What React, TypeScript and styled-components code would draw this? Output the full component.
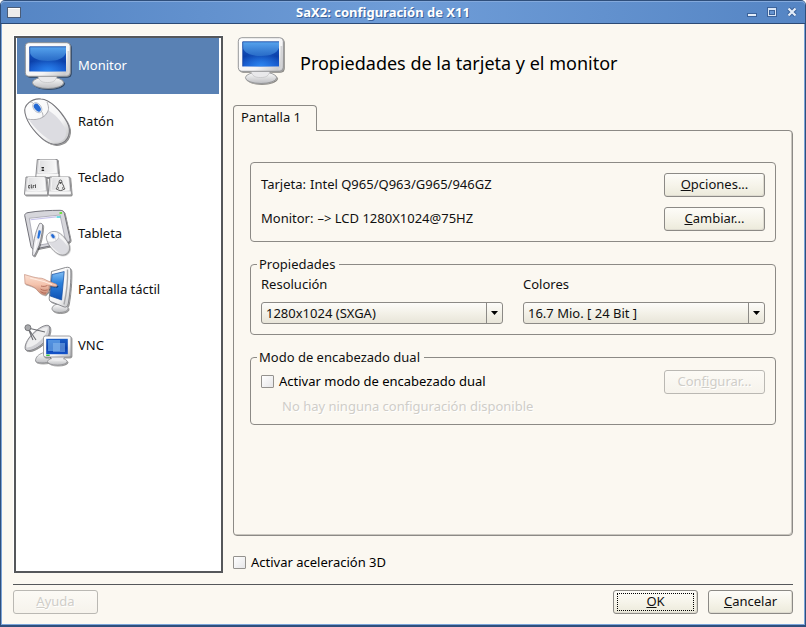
import React from "react";
import styled, { createGlobalStyle, css } from "styled-components";

const ink = "#101010";
const paper = "#fbf8f1";
const line = "#8c8a86";

const GlobalStyle = createGlobalStyle`
  *, *::before, *::after { box-sizing: border-box; }
  body { margin: 0; background: #fff; }
  body, button, select, input {
    font-family: "Noto Sans", "Open Sans", sans-serif;
    font-size: 13px;
    line-height: 20px;
    color: ${ink};
  }
`;

const Window = styled.div`
  display: flex;
  flex-direction: column;
  min-height: 100vh;
  border: 1px solid #2f4f7c;
  border-bottom-width: 2px;
  border-radius: 5px 5px 0 0;
  background: ${paper};
  box-shadow: inset 1px 0 #7ba4d8, inset -1px 0 #7ba4d8, inset 0 -1px #7ba4d8;
`;

const TitleBar = styled.header`
  display: grid;
  grid-template-columns: 26px 1fr 63px;
  align-items: center;
  height: 23px;
  border-bottom: 1px solid #2c4a75;
  border-radius: 4px 4px 0 0;
  box-shadow: inset 0 1px #83a9dc;
  background: linear-gradient(90deg, #5585c4, #6f9dd8 50%, #5585c4);
`;

const Title = styled.h1`
  margin: 0;
  padding-right: 3px;
  font-size: 13px;
  line-height: 20px;
  font-weight: 700;
  text-align: center;
  color: #fff;
  text-shadow: 1px 1px #3c639b;
`;

const WindowButton = styled.button`
  display: flex;
  justify-content: center;
  align-items: center;
  justify-self: center;
  width: 20px;
  height: 20px;
  padding: 0;
  border: 0;
  background: none;
`;

const WindowButtons = styled.div`
  display: flex;
`;

const Body = styled.div`
  display: flex;
  flex: 1;
  gap: 10px;
  padding: 11px 12px 11px;
`;

const Sidebar = styled.nav`
  flex: 0 0 210px;
  border: 1px solid #fff;
  border-right: 0;
  border-bottom: 0;
`;

const SidebarList = styled.ul`
  height: 100%;
  margin: 0;
  padding: 0 2px 0 1px;
  list-style: none;
  border: 2px solid #55575a;
  background: #fff;
`;

const SidebarItem = styled.button<{ $selected?: boolean }>`
  display: flex;
  align-items: center;
  gap: 6px;
  width: 100%;
  height: 56px;
  padding: 0 7px;
  border: 0;
  background: ${(p) => (p.$selected ? "#5981b4" : "transparent")};
  color: ${(p) => (p.$selected ? "#fff" : ink)};
  text-align: left;
`;

const ItemLabel = styled.span`
  padding-bottom: 2px;
`;

const Main = styled.main`
  display: flex;
  flex: 1;
  flex-direction: column;
  min-width: 0;
`;

const PageHeader = styled.div`
  display: flex;
  align-items: center;
  gap: 15px;
  padding: 2px 4px 20px;
`;

const PageTitle = styled.h2`
  margin: 0;
  padding-top: 3px;
  font-size: 18px;
  line-height: 26px;
  font-weight: 400;
  color: #000;
`;

const TabStrip = styled.div`
  display: flex;
  height: 25px;
`;

const Tab = styled.button`
  position: relative;
  width: 84px;
  height: 26px;
  padding: 0 7px 3px;
  border: 1px solid ${line};
  border-bottom: 0;
  border-radius: 4px 4px 0 0;
  background: ${paper};
  text-align: left;
`;

const Pane = styled.section`
  display: flex;
  flex: 1;
  flex-direction: column;
  gap: 13px;
  padding: 31px 16px 16px;
  border: 1px solid ${line};
  border-radius: 0 4px 4px 4px;
  box-shadow: inset -1px -1px #c9c6bf;
`;

const groupBox = css`
  border: 1px solid ${line};
  border-radius: 4px;
`;

const HardwareGroup = styled.div`
  ${groupBox}
  display: flex;
  flex-direction: column;
  gap: 10px;
  padding: 10px;
`;

const Row = styled.div`
  display: flex;
  align-items: center;
  justify-content: space-between;

  & > :first-child {
    padding-bottom: 2px;
  }
`;

const Pair = styled.div`
  display: flex;
  gap: 4px;
`;

const Group = styled.fieldset`
  ${groupBox}
  min-width: 0;
  margin: 0;
  padding: 0 10px;
`;

const Legend = styled.legend`
  margin-left: -4px;
  padding: 0 4px 0 2px;
  line-height: 19px;
`;

const Fields = styled.div`
  display: grid;
  grid-template-columns: 1fr 1fr;
  gap: 20px;
  padding-bottom: 10px;
`;

const Field = styled.div`
  display: flex;
  flex-direction: column;
  gap: 8px;
`;

const SelectFrame = styled.div`
  display: grid;
  grid-template-columns: 1fr 16px;
  height: 22px;
  border: 1px solid ${line};
  border-radius: 3px;
  background: linear-gradient(#fdfcf9, #f3f1e8 50%, #e8e5d9);
`;

const Select = styled.select`
  grid-area: 1 / 1 / 2 / 3;
  width: 100%;
  height: 20px;
  padding: 0 20px 2px 4px;
  border: 0;
  appearance: none;
  background: none;
`;

const SelectArrow = styled.span`
  grid-area: 1 / 2;
  display: flex;
  align-items: center;
  justify-content: center;
  border-left: 1px solid ${line};
  pointer-events: none;
`;

const DualBody = styled.div`
  display: flex;
  flex-direction: column;
  gap: 2px;
  padding: 3px 0 8px;
`;

const Note = styled.p`
  margin: 0 0 0 21px;
  color: #cfcdc8;
  text-shadow: 1px 1px #fff;
`;

const Button = styled.button<{ $wide?: boolean }>`
  width: ${(p) => (p.$wide ? 101 : 85)}px;
  height: 24px;
  padding: 0 0 2px;
  border: 1px solid ${line};
  border-radius: 3px;
  background: linear-gradient(#fdfcf8, #f6f4ea 50%, #eceadb);
  box-shadow: inset -1px -1px #dedbd0;

  &:disabled {
    border-color: #bab8b3;
    background: linear-gradient(#fcfaf5, #f6f3ec);
    box-shadow: none;
    color: #cfcdc8;
    text-shadow: 1px 1px #fff;
  }
`;

const FocusMark = styled.span`
  display: block;
  height: 18px;
  margin: 2px 3px 0;
  border: 1px dotted #000;
  line-height: 14px;
`;

const CheckLabel = styled.label`
  display: flex;
  align-items: center;
  gap: 5px;
  color: #000;
`;

const Checkbox = styled.input`
  width: 13px;
  height: 13px;
  margin: 0;
  border: 1px solid #94928e;
  border-radius: 1px;
  appearance: none;
  background: linear-gradient(135deg, #fff, #e6e6e8);
  &:checked { background: #5981b4; }
`;

const Acceleration = styled.div`
  display: flex;
  height: 22px;
  margin-top: 15px;
`;

const Footer = styled.footer`
  display: flex;
  gap: 10px;
  margin: 0 12px;
  padding: 5px 0 11px;
  border-top: 1px solid #55575a;
`;

const Spacer = styled.span`
  flex: 1;
`;

const Icon = styled.svg`
  display: block;
  flex: none;
  width: 48px;
  height: 48px;
  overflow: visible;
`;

const SharedDefs = styled.svg`
  position: absolute;
  width: 0;
  height: 0;
`;

function Gradients() {
  return (
    <SharedDefs aria-hidden="true">
      <defs>
        <linearGradient id="screen" x1="0" y1="0" x2="0" y2="1">
          <stop offset="0" stopColor="#1a5fc8" />
          <stop offset="0.6" stopColor="#0b40aa" />
          <stop offset="1" stopColor="#1454cc" />
        </linearGradient>
        <radialGradient id="glow" cx="0.5" cy="1" r="0.6">
          <stop offset="0" stopColor="#2c86f0" />
          <stop offset="1" stopColor="#2c86f0" stopOpacity="0" />
        </radialGradient>
        <linearGradient id="gloss" x1="0" y1="0" x2="0" y2="1">
          <stop offset="0" stopColor="#62b0f4" />
          <stop offset="1" stopColor="#2c70ca" />
        </linearGradient>
        <linearGradient id="shell" x1="0" y1="0" x2="1" y2="1">
          <stop offset="0" stopColor="#fff" />
          <stop offset="0.65" stopColor="#f4f4f5" />
          <stop offset="1" stopColor="#bbbcbe" />
        </linearGradient>
        <linearGradient id="base" x1="0" y1="0" x2="0" y2="1">
          <stop offset="0" stopColor="#fff" />
          <stop offset="1" stopColor="#bdbec1" />
        </linearGradient>
        <linearGradient id="key" x1="0" y1="0" x2="1" y2="0">
          <stop offset="0" stopColor="#dedee0" />
          <stop offset="1" stopColor="#f8f8f8" />
        </linearGradient>
        <linearGradient id="skin" x1="0" y1="0" x2="0" y2="1">
          <stop offset="0" stopColor="#fbe0d2" />
          <stop offset="0.5" stopColor="#f4c3ad" />
          <stop offset="1" stopColor="#c98a75" />
        </linearGradient>
        <linearGradient id="touch" x1="0" y1="0" x2="0" y2="1">
          <stop offset="0" stopColor="#85c0f4" />
          <stop offset="0.4" stopColor="#2d82dc" />
          <stop offset="1" stopColor="#0d50b4" />
        </linearGradient>
        <filter id="drop" x="-20%" y="-20%" width="150%" height="150%">
          <feDropShadow dx="1" dy="1" stdDeviation="0.7" floodColor="#000" floodOpacity="0.45" />
        </filter>
      </defs>
    </SharedDefs>
  );
}

function MonitorIcon() {
  return (
    <Icon viewBox="0 0 48 48" aria-hidden="true">
      <g filter="url(#drop)">
        <ellipse cx="24" cy="40.7" rx="15.6" ry="5.8" fill="url(#base)" stroke="#8d8e91" strokeWidth="0.8" />
        <path d="M14 34h19c-1 5-4 6.5-9.500 6.500S15 39 14 34z" fill="#e9e9eb" stroke="#b2b3b5" strokeWidth="0.5" />
        <rect x="1.3" y="0.7" width="45" height="33.6" rx="3.5" fill="url(#shell)" stroke="#8c8d90" strokeWidth="0.9" />
      </g>
      <path d="M44.500 9v20q0 3-3 3" fill="none" stroke="#d3d4d6" strokeWidth="2" />
      <rect x="5.7" y="4.8" width="36.3" height="24.6" fill="url(#screen)" />
      <rect x="5.7" y="4.8" width="36.3" height="24.6" fill="url(#glow)" />
      <path d="M5.700 4.800h36.300v6c-2 6-9 8.200-18 8.200S8 16.800 5.700 10.800z" fill="url(#gloss)" opacity="0.85" />
      <path d="M5.700 29.400V4.800H42" fill="none" stroke="#0c3a96" strokeWidth="0.7" />
    </Icon>
  );
}

function MouseShape() {
  return (
    <>
      <path
        d="M1 15C-1 7 8 0 17 1c9 .5 19 11 26 23 5 9 2 20-8 22-9 2-18-5-26-15C5 26 2 20 1 15z"
        fill="url(#shell)"
        stroke="#77777c"
        strokeWidth="1.1"
        filter="url(#drop)"
      />
      <path d="M5 22c8 1 15-1 19-10 8 5 13 11 17 18 3 8-1 13-7 14-9 0-20-10-29-22z" fill="#dcdce1" />
      <path d="M3 21c10 2 17-1 20-6 2-3 2-6 0-11" fill="none" stroke="#a5a5aa" strokeWidth="0.9" />
      <path d="M10 6c-2-2-3-2-4-2m11 9c2 2 2 4 2 6" fill="none" stroke="#a5a5aa" strokeWidth="0.8" />
      <ellipse cx="13.3" cy="9.7" rx="3.8" ry="5.7" transform="rotate(-38 13.3 9.7)" fill="#e7eefa" stroke="#a6afbf" strokeWidth="0.7" />
      <ellipse cx="13.3" cy="9.7" rx="2.7" ry="4.5" transform="rotate(-38 13.3 9.7)" fill="#2469d3" />
    </>
  );
}

function MouseIcon() {
  return (
    <Icon viewBox="0 0 48 48" aria-hidden="true">
      <MouseShape />
    </Icon>
  );
}

function KeyCap({ x, y }: { x: number; y: number }) {
  return (
    <g transform={`translate(${x} ${y})`}>
      <path d="M1.500 1h20l1.500 17q0 1-1 1H1q-1 0-1-1z" fill="#d5d5d7" stroke="#838387" strokeWidth="0.9" />
      <path d="M1 15.500h21.600v2.800H.7z" fill="#f7f7f7" />
      <path d="M3.800 1.500h16l1 12.500q-9 1.500-18 .2z" fill="url(#key)" stroke="#fff" strokeWidth="0.7" />
    </g>
  );
}

function KeyboardIcon() {
  return (
    <Icon viewBox="0 0 48 48" aria-hidden="true">
      <g filter="url(#drop)">
        <KeyCap x={11.8} y={4.5} />
        <KeyCap x={0.5} y={22} />
        <KeyCap x={24.2} y={22} />
      </g>
      <path d="M17.500 13.500h2.500m-2.200 1.500h2m-2.200 1.500h2.500" stroke="#222" strokeWidth="1.1" />
      <path d="M6 31.500h-1.300v2.500H6m1.300-3.600V34h1m.9-2.600V34m0-2.500h1.300m1-1.100V34" fill="none" stroke="#333" strokeWidth="0.8" />
      <path
        d="M36.500 26c-1.400 0-1.500 1.500-1.400 3-.6 1.300-1.900 2.500-2 4.300l-1 1.600 2.700 1.300c1 .5 2.400.5 3.400 0l2.700-1.300-1-1.600c-.1-1.800-1.400-3-2-4.300.1-1.500 0-3-1.400-3z"
        fill="#eee"
        stroke="#333"
        strokeWidth="0.8"
      />
      <path d="M35.600 28.500h1.800l-.9 1.200zm-1.300 4.500v2m4.400-2v2" fill="#333" stroke="#333" strokeWidth="0.6" />
    </Icon>
  );
}

function TabletIcon() {
  return (
    <Icon viewBox="0 0 48 48" aria-hidden="true">
      <path
        d="M.7 5.500C.6 4 2 3 4 2.600 14 .8 27 .3 36 .3c3 0 4 1.200 4.400 3.200L46 29c.3 2-.4 3-2 3.300L11 39c-2 .4-3.600-.6-4-2.400z"
        fill="#d6d6db"
        stroke="#72727a"
        strokeWidth="1"
        filter="url(#drop)"
      />
      <path d="M5.300 8.300 36 5l5.500 25.500L10 36z" fill="#fff" stroke="#a2a2ae" strokeWidth="0.8" />
      <path d="M6.500 9.800 32 6.900" stroke="#c5c1ea" strokeWidth="1.100" />
      <path d="M32.500 7h4" stroke="#35cbd5" strokeWidth="1.4" />
      <path d="M35.500 3.200l2.600-.3" stroke="#63e52d" strokeWidth="1.8" />
      <g transform="translate(22 21) scale(0.52)">
        <MouseShape />
      </g>
      <g filter="url(#drop)">
        <path d="M15.500 13.500c2-.8 3.300.6 3.200 2.500-.5 9-2.500 18-6 25l-2.600 5-1.500-.6c0-11 2.400-23 6.900-31.900z" fill="#ececf0" stroke="#77777e" strokeWidth="0.8" />
        <path d="M14.500 20.500c2-1 2.600.3 2.200 2.300l-1.400 5.300c-.8 1-2 .5-2-.6z" fill="#2672dc" />
        <path d="M13 30l-2.500 11" stroke="#fff" strokeWidth="1.2" />
      </g>
    </Icon>
  );
}

function TouchIcon() {
  return (
    <Icon viewBox="0 0 48 48" aria-hidden="true">
      <g filter="url(#drop)">
        <path d="M28 42c1-3 4-4 8-4s8 2 8 4.500-4 4-8.500 4S27.500 45 28 42z" fill="url(#base)" stroke="#88898c" strokeWidth="0.8" />
        <path d="M27.500 5.500 41.500 1.500q5-1 5.300 2.500c.5 10-1 25-2.500 33.500-.6 3-2 4-4 3.500L27 35.700q-2-.7-1.800-3z" fill="url(#shell)" stroke="#7e7f83" strokeWidth="0.9" />
      </g>
      <path d="M43.500 3.500c.5 12-1 24-3.500 35" fill="none" stroke="#a7a8ab" strokeWidth="1.4" />
      <path d="M28 8.500 40.200 5.600 37.600 34l-11.400-4z" fill="url(#touch)" stroke="#114b9d" strokeWidth="0.7" />
      <g filter="url(#drop)">
        <path
          d="M.5 8.500C6 10 10 11.500 14.500 12c4 0 6 1.200 8.500 2.600l9 3.500c1.600.8 1.400 2.400-.5 2.500l-7-1.200c1 2 .8 3.500-.5 4.500.4 1.700-.2 2.700-1.700 3.200-.2 1.600-1.500 2-2.800 1.500-3-.8-5.500-2.800-7.500-6C9 20.300 5 19 1 17.800z"
          fill="url(#skin)"
          stroke="#bd8472"
          strokeWidth="0.6"
        />
      </g>
      <path d="M17 20c2 .7 4.500.5 6.500-.6M16.500 23c2.500 1.700 5 1.700 7 .8M16.500 25.500c2 1.500 4 1.800 5.500 1.500" fill="none" stroke="#a8604e" strokeWidth="0.8" />
      <path d="M6 12l14 3.500 8 3" fill="none" stroke="#fff0e8" strokeWidth="0.9" />
    </Icon>
  );
}

function VncIcon() {
  return (
    <Icon viewBox="0 0 48 48" aria-hidden="true">
      <g filter="url(#drop)">
        <path d="M11.500 39c0-4 3-6.500 7-8l8 4v4.500c-3 2-15 2-15-.5z" fill="url(#base)" stroke="#85868a" strokeWidth="0.8" />
        <path d="M25.300 4c2 5-1 12-7 18-6 5-13 8-16.500 6C-.5 25 3 17 9 11.500 14.500 6 22 1.500 25.300 4z" fill="#cfcfd3" stroke="#7d7d82" strokeWidth="0.9" />
      </g>
      <path d="M24 5.500c-1 5-3 9-8 13.500-5 4.500-10 6.500-13.500 6.500C2.500 21 5.500 16 10 12 15 7.500 20.500 4 24 5.500z" fill="#eeeeef" />
      <path d="M9 18l-5-12 17 4M4 6l8 12" fill="none" stroke="#6d6e73" strokeWidth="1.1" />
      <circle cx="3.900" cy="5.700" r="3" fill="#a9aaad" stroke="#66676b" strokeWidth="0.8" />
      <g filter="url(#drop)">
        <ellipse cx="33.3" cy="39.5" rx="9.8" ry="3.6" fill="url(#base)" stroke="#898a8e" strokeWidth="0.7" />
        <path d="M27 35h13c-1 3-3 4-6.500 4S28 38 27 35z" fill="#ececee" />
        <rect x="19.5" y="14" width="27.5" height="21" rx="1.8" fill="url(#shell)" stroke="#88898d" strokeWidth="0.8" />
      </g>
      <rect x="22.2" y="16.8" width="21.6" height="15.4" fill="url(#screen)" />
      <path d="M24 18h12v11H24z" fill="#72b0ef" opacity="0.65" />
      <path d="M29 21h12v9H29z" fill="#8fc0f2" opacity="0.5" />
      <path d="M22.200 33.300h3.500" stroke="#39c43b" strokeWidth="1.4" />
    </Icon>
  );
}

const devices = [
  { name: "Monitor", Picture: MonitorIcon },
  { name: "Ratón", Picture: MouseIcon },
  { name: "Teclado", Picture: KeyboardIcon },
  { name: "Tableta", Picture: TabletIcon },
  { name: "Pantalla táctil", Picture: TouchIcon },
  { name: "VNC", Picture: VncIcon },
];

function Dropdown({ id, label, value }: { id: string; label: string; value: string }) {
  return (
    <Field>
      <label htmlFor={id}>{label}</label>
      <SelectFrame>
        <Select id={id} defaultValue={value}>
          <option>{value}</option>
        </Select>
        <SelectArrow>
          <svg width="7" height="4" viewBox="0 0 7 4" aria-hidden="true">
            <path d="M0 0h7L3.500 4z" fill="#000" />
          </svg>
        </SelectArrow>
      </SelectFrame>
    </Field>
  );
}

export default function App() {
  return (
    <>
      <GlobalStyle />
      <Gradients />
      <Window>
        <TitleBar>
          <WindowButton aria-label="Menú de la ventana">
            <svg width="14" height="11" viewBox="0 0 14 11" aria-hidden="true">
              <rect x="0.5" y="0.5" width="13" height="10" fill="#ececec" stroke="#4a5c78" />
              <path d="M1 1.500h12" stroke="#fff" />
            </svg>
          </WindowButton>
          <Title>SaX2: configuración de X11</Title>
          <WindowButtons>
            <WindowButton aria-label="Minimizar">
              <svg width="10" height="10" viewBox="0 0 10 10" aria-hidden="true">
                <rect x="0.5" y="6.5" width="9" height="3" fill="#e3edf9" stroke="#3c639b" />
              </svg>
            </WindowButton>
            <WindowButton aria-label="Maximizar">
              <svg width="10" height="10" viewBox="0 0 10 10" aria-hidden="true">
                <path d="M0 0h10v10H0z" fill="#3c639b" />
                <path d="M1 1h8v8H1z" fill="#d9e6f6" />
                <path d="M2 3h6v5H2z" fill="#3c639b" />
                <path d="M3 4h4v3H3z" fill="#6593cf" />
              </svg>
            </WindowButton>
            <WindowButton aria-label="Cerrar">
              <svg width="10" height="10" viewBox="0 0 10 10" aria-hidden="true">
                <path d="M1.500 1.500l7 7m0-7l-7 7" stroke="#3c639b" strokeWidth="4" />
                <path d="M1.500 1.500l7 7m0-7l-7 7" stroke="#e3edf9" strokeWidth="2.2" />
              </svg>
            </WindowButton>
          </WindowButtons>
        </TitleBar>

        <Body>
          <Sidebar>
            <SidebarList>
              {devices.map(({ name, Picture }, i) => (
                <li key={name}>
                  <SidebarItem $selected={i === 0} aria-current={i === 0 ? "page" : undefined}>
                    <Picture />
                    <ItemLabel>{name}</ItemLabel>
                  </SidebarItem>
                </li>
              ))}
            </SidebarList>
          </Sidebar>

          <Main>
            <PageHeader>
              <MonitorIcon />
              <PageTitle>Propiedades de la tarjeta y el monitor</PageTitle>
            </PageHeader>

            <TabStrip role="tablist">
              <Tab role="tab" aria-selected="true">Pantalla 1</Tab>
            </TabStrip>
            <Pane role="tabpanel" aria-label="Pantalla 1">
              <HardwareGroup>
                <Row>
                  <Pair><span>Tarjeta:</span><span>Intel Q965/Q963/G965/946GZ</span></Pair>
                  <Button $wide><u>O</u>pciones...</Button>
                </Row>
                <Row>
                  <Pair><span>Monitor:</span><span>–&gt; LCD 1280X1024@75HZ</span></Pair>
                  <Button $wide><u>C</u>ambiar...</Button>
                </Row>
              </HardwareGroup>

              <Group>
                <Legend>Propiedades</Legend>
                <Fields>
                  <Dropdown id="resolution" label="Resolución" value="1280x1024 (SXGA)" />
                  <Dropdown id="colors" label="Colores" value="16.7 Mio. [ 24 Bit ]" />
                </Fields>
              </Group>

              <Group>
                <Legend>Modo de encabezado dual</Legend>
                <DualBody>
                  <Row>
                    <CheckLabel>
                      <Checkbox type="checkbox" />
                      Activar modo de encabezado dual
                    </CheckLabel>
                    <Button $wide disabled>Con<u>f</u>igurar...</Button>
                  </Row>
                  <Note>No hay ninguna configuración disponible</Note>
                </DualBody>
              </Group>
            </Pane>

            <Acceleration>
              <CheckLabel>
                <Checkbox type="checkbox" />
                Activar aceleración 3D
              </CheckLabel>
            </Acceleration>
          </Main>
        </Body>

        <Footer>
          <Button disabled><u>A</u>yuda</Button>
          <Spacer />
          <Button><FocusMark><u>O</u>K</FocusMark></Button>
          <Button><u>C</u>ancelar</Button>
        </Footer>
      </Window>
    </>
  );
}
